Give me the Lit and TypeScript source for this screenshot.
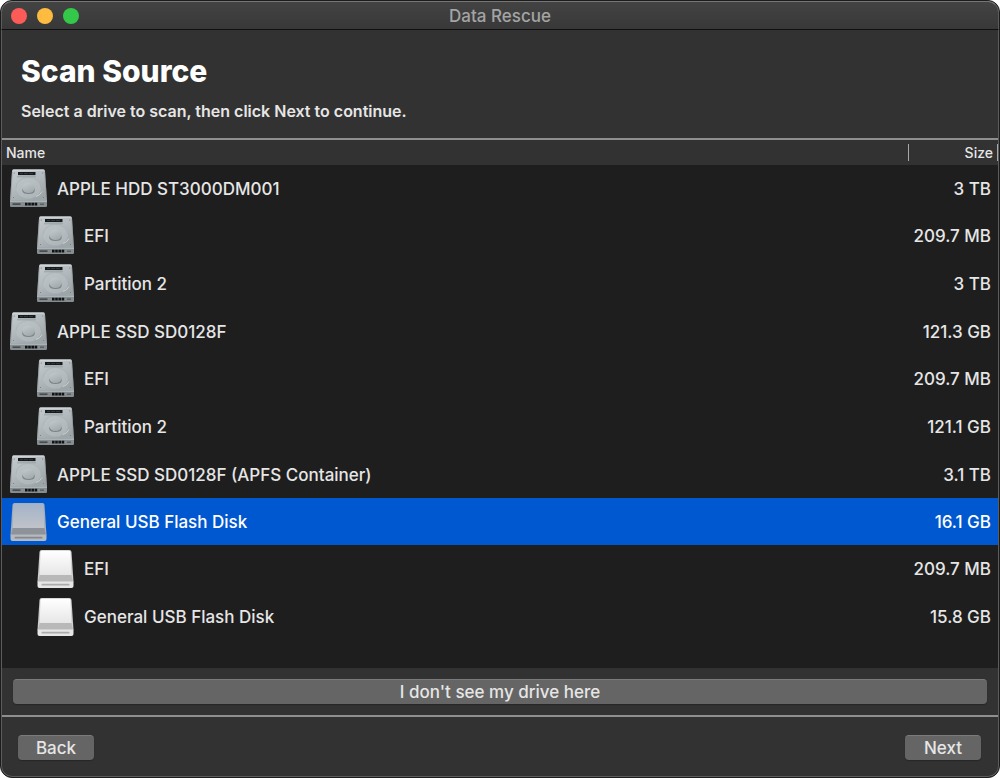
import { LitElement, html, css, svg } from "lit";
import { customElement, property, state } from "lit/decorators.js";

type DriveKind = "hdd" | "usb";

interface Drive {
  id: number;
  name: string;
  size: string;
  kind: DriveKind;
  child: boolean;
}

const DRIVES: Drive[] = [
  { id: 0, name: "APPLE HDD ST3000DM001", size: "3 TB", kind: "hdd", child: false },
  { id: 1, name: "EFI", size: "209.7 MB", kind: "hdd", child: true },
  { id: 2, name: "Partition 2", size: "3 TB", kind: "hdd", child: true },
  { id: 3, name: "APPLE SSD SD0128F", size: "121.3 GB", kind: "hdd", child: false },
  { id: 4, name: "EFI", size: "209.7 MB", kind: "hdd", child: true },
  { id: 5, name: "Partition 2", size: "121.1 GB", kind: "hdd", child: true },
  { id: 6, name: "APPLE SSD SD0128F (APFS Container)", size: "3.1 TB", kind: "hdd", child: false },
  { id: 7, name: "General USB Flash Disk", size: "16.1 GB", kind: "usb", child: false },
  { id: 8, name: "EFI", size: "209.7 MB", kind: "usb", child: true },
  { id: 9, name: "General USB Flash Disk", size: "15.8 GB", kind: "usb", child: true },
];

const hddArt = svg`
  <defs>
    <linearGradient id="top" x1="0" y1="0" x2=".6" y2="1">
      <stop offset="0" stop-color="#c6cccf" />
      <stop offset=".5" stop-color="#b4bbbf" />
      <stop offset="1" stop-color="#9da5a9" />
    </linearGradient>
    <linearGradient id="hub" x1="0" y1="0" x2=".5" y2="1">
      <stop offset="0" stop-color="#c4cbce" />
      <stop offset="1" stop-color="#a3abaf" />
    </linearGradient>
  </defs>
  <g transform="translate(0 -1)">
    <path d="M3.400 .5H33.600Q34.800 .5 34.900 1.800L37 32H0L2.100 1.800Q2.200 .5 3.400 .5Z" fill="url(#top)" />
    <path d="M3.200 1H33.800" stroke="#dfe3e5" stroke-width=".9" />
    <path d="M2.300 3L.6 31M34.700 3L36.400 31" stroke="#8f969a" stroke-width=".6" fill="none" />
    <rect x="8" y="3" width="17.500" height="3.100" fill="#181b1d" />
    <path d="M10 4.500h3m1 0h4m1 0h4" stroke="#4d5356" stroke-width=".5" />
    <path d="M7 7.800H26" stroke="#8b9397" stroke-width=".7" />
    <ellipse cx="18.500" cy="19" rx="12.500" ry="10.500" fill="#bcc4c8" opacity=".5" />
    <path d="M6 19a12.500 10.500 0 0 1 25 0" fill="none" stroke="#a2aaae" stroke-width=".5" />
    <path d="M12.300 19.500v2.200q.4 3.300 6.200 3.300t6.200-3.300v-2.200Z" fill="#7b8489" />
    <ellipse cx="18.500" cy="18.800" rx="6.300" ry="5.200" fill="url(#hub)" />
    <path d="M26 27.500q4-1 6-5" stroke="#cdd3d6" stroke-width=".9" fill="none" />
    <circle cx="4.300" cy="4" r=".6" fill="#737b7f" />
    <circle cx="32.700" cy="4" r=".6" fill="#737b7f" />
    <circle cx="3.500" cy="28.500" r=".6" fill="#737b7f" />
    <circle cx="33.500" cy="28.500" r=".6" fill="#737b7f" />
    <path d="M0 31.500H37V36.800Q37 38 35.800 38H1.200Q0 38 0 36.800Z" fill="#858d91" />
    <path d="M0 32.200H37" stroke="#bdc4c7" stroke-width="1" />
    <path d="M2.500 35.200h8" stroke="#474d50" stroke-width="1.700" />
    <path d="M15 35.200h12.500" stroke="#101315" stroke-width="2.800" stroke-dasharray="2.600 .6" />
    <path d="M30 35.200h4" stroke="#5a6165" stroke-width="1.500" />
  </g>
`;

const usbArt = svg`
  <defs>
    <linearGradient id="lid" x1="0" y1="0" x2="0" y2="1">
      <stop offset="0" stop-color="var(--lid-top)" />
      <stop offset="1" stop-color="var(--lid-bottom)" />
    </linearGradient>
  </defs>
  <g transform="translate(.5 0)">
    <path d="M4 0H32Q33.800 0 34 2L36 32H0L2 2Q2.200 0 4 0Z" fill="var(--edge)" />
    <path d="M4.500 .8H31.500Q32.900 .8 33 2.300L33.800 25H2.200L3 2.300Q3.100 .8 4.500 .8Z" fill="url(#lid)" />
    <path d="M2.200 25H33.800L35.500 32H.5Z" fill="var(--slope)" />
    <path d="M0 31.500H36V36Q36 38 34 38H2Q0 38 0 36Z" fill="var(--foot)" />
    <rect x="4" y="33.800" width="28" height="1.800" rx=".9" fill="var(--slot)" />
  </g>
`;

@customElement("drive-icon")
export class DriveIcon extends LitElement {
  @property() kind: DriveKind = "hdd";

  static styles = css`
    :host {
      display: block;
      width: 37px;
      height: 38px;
    }
    .art {
      display: block;
      width: 100%;
      height: 100%;
      overflow: visible;
      --lid-top: #ffffff;
      --lid-bottom: #e6e6e6;
      --edge: #cdcecd;
      --slope: #b7b8b7;
      --foot: #e6e6e6;
      --slot: #aaabaa;
    }
    :host([dimmed]) .art {
      --lid-top: #a3b3c9;
      --lid-bottom: #c0c3c9;
      --edge: #a5adb9;
      --slope: #8e9299;
      --foot: #b6babf;
      --slot: #83888f;
    }
  `;

  render() {
    return html`<svg class="art" viewBox="0 0 37 38" aria-hidden="true">
      ${this.kind === "hdd" ? hddArt : usbArt}
    </svg>`;
  }
}

@customElement("app-root")
export class AppRoot extends LitElement {
  @state() private selected = 7;

  static styles = css`
    :host {
      display: block;
      background: #ffffff;
      color: #e6e6e6;
      font: 500 17px/20px Inter, "Liberation Sans", sans-serif;
    }
    * {
      box-sizing: border-box;
    }
    .window {
      display: flex;
      flex-direction: column;
      min-height: 100vh;
      overflow: hidden;
      padding: 0 1px;
      border: 1px solid #1c1c1c;
      border-radius: 12px;
      background: #323232;
      box-shadow: inset 0 0 0 1px #5c5c5c;
    }
    .titlebar {
      display: grid;
      grid-template-columns: 1fr auto 1fr;
      align-items: center;
      height: 29px;
      margin: 0 -1px;
      padding: 0 9px;
      border: 1px solid #5c5c5c;
      border-top-color: #767676;
      border-bottom-color: #101010;
      border-radius: 11px 11px 0 0;
      background: linear-gradient(#434343, #383838);
    }
    .lights {
      display: flex;
      gap: 10px;
    }
    .light {
      width: 16px;
      height: 16px;
      padding: 0;
      border: 0;
      border-radius: 50%;
    }
    .close {
      background: #fc5b57;
    }
    .minimize {
      background: #fdbc40;
    }
    .zoom {
      background: #34c84a;
    }
    .title {
      color: #a4a4a4;
    }
    .intro {
      padding: 21px 19px 17px;
      border-bottom: 2px solid #8e8f8e;
    }
    .heading {
      margin: 0;
      color: #ffffff;
      font-size: 30px;
      font-weight: 800;
      line-height: 40px;
    }
    .hint {
      margin: 10px 0 0;
      font-size: 16px;
      font-weight: 600;
    }
    .drives {
      flex: 1;
      background: #1e1e1e;
    }
    .table {
      width: 100%;
      border-collapse: collapse;
      table-layout: fixed;
    }
    .col-size {
      width: 90px;
    }
    .head {
      height: 25px;
      background: #323232;
      font-size: 14px;
      line-height: 17px;
    }
    .head th {
      padding: 0;
      font-weight: 500;
      text-align: left;
    }
    .head .label {
      display: block;
      padding: 0 4px;
    }
    .head .label-size {
      border: solid #a8a8a8;
      border-width: 0 1px;
      text-align: right;
    }
    .row {
      height: 47px;
    }
    .row.child {
      height: 48px;
    }
    .row td {
      padding: 0;
    }
    .row .size {
      padding-right: 7px;
      text-align: right;
    }
    .row.selected {
      background: #0058d0;
      color: #ffffff;
    }
    .row:focus {
      outline: none;
    }
    .drive {
      display: flex;
      align-items: center;
      gap: 10px;
      padding-left: 8px;
    }
    .child .drive {
      padding-left: 35px;
    }
    .missing {
      padding: 11px;
      border-bottom: 2px solid #8e8f8e;
    }
    .button {
      display: block;
      height: 25px;
      padding: 0;
      border: 0;
      border-top: 1px solid #7b7b7b;
      border-radius: 4px;
      background: #656565;
      color: #e6e6e6;
      font: inherit;
      line-height: 24px;
      box-shadow: 0 1px 1px #262626;
    }
    .wide {
      width: 100%;
    }
    .actions {
      display: flex;
      justify-content: space-between;
      padding: 18px 17px 17px 16px;
    }
    .action {
      width: 76px;
    }
  `;

  private pick(id: number) {
    this.selected = id;
  }

  private row(drive: Drive) {
    const on = drive.id === this.selected;
    return html`<tr
      class="row ${drive.child ? "child" : ""} ${on ? "selected" : ""}"
      tabindex="0"
      aria-selected=${on ? "true" : "false"}
      @click=${() => this.pick(drive.id)}
      @focus=${() => this.pick(drive.id)}
    >
      <td>
        <div class="drive">
          <drive-icon .kind=${drive.kind} ?dimmed=${on}></drive-icon>
          <span>${drive.name}</span>
        </div>
      </td>
      <td class="size">${drive.size}</td>
    </tr>`;
  }

  render() {
    return html`<main class="window">
      <header class="titlebar">
        <div class="lights">
          <button class="light close" aria-label="Close"></button>
          <button class="light minimize" aria-label="Minimize"></button>
          <button class="light zoom" aria-label="Zoom"></button>
        </div>
        <span class="title">Data Rescue</span>
      </header>
      <section class="intro">
        <h1 class="heading">Scan Source</h1>
        <p class="hint">Select a drive to scan, then click Next to continue.</p>
      </section>
      <section class="drives">
        <table class="table">
          <colgroup>
            <col />
            <col class="col-size" />
          </colgroup>
          <thead>
            <tr class="head">
              <th scope="col"><span class="label">Name</span></th>
              <th scope="col"><span class="label label-size">Size</span></th>
            </tr>
          </thead>
          <tbody>
            ${DRIVES.map((drive) => this.row(drive))}
          </tbody>
        </table>
      </section>
      <section class="missing">
        <button class="button wide">I don't see my drive here</button>
      </section>
      <footer class="actions">
        <button class="button action">Back</button>
        <button class="button action">Next</button>
      </footer>
    </main>`;
  }
}
